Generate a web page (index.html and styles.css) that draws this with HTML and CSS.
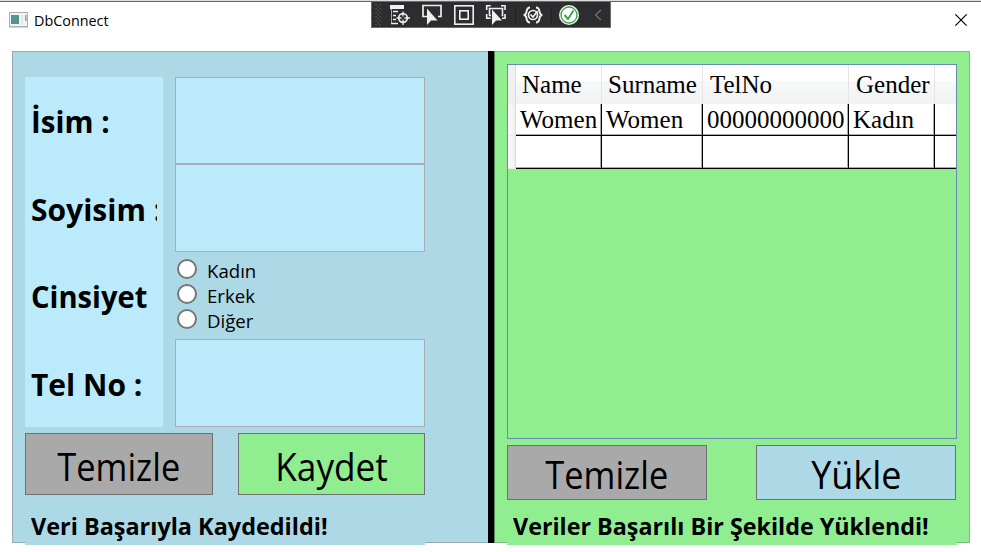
FILE: index.html
```html
<!DOCTYPE html>
<html lang="tr">
<head>
<meta charset="utf-8">
<title>DbConnect</title>
<link rel="stylesheet" href="styles.css">
</head>
<body>
<header class="titlebar">
  <svg class="app-icon" width="20" height="16" viewBox="0 0 20 16">
    <rect x=".5" y=".5" width="18" height="14" fill="#f1f3f5" stroke="#a9afb8"/>
    <path d="M0 15.5h19" stroke="#d4d4d4"/>
    <rect x="2" y="3" width="8" height="9" fill="#5b8fae"/>
    <path d="M2 12V8l8-4v8z" fill="#4c9b74" opacity=".8"/>
    <rect x="12" y="3" width="2" height="10" fill="#e2e6ea"/>
    <rect x="16" y="3" width="1.500" height="6" fill="#71b59b"/>
  </svg>
  <span class="caption">DbConnect</span>
  <svg class="close" width="12" height="12" viewBox="0 0 12 12"><path d="M.4.400l11.200 11.200M11.600.400L.4 11.600" stroke="#000" stroke-width="1.200"/></svg>
</header>
<div class="debugbar">
  <svg width="240" height="27" viewBox="371 1 240 27" fill="none">
    <rect x="371.500" y="1.500" width="239" height="26" fill="#2d2d30" stroke="#6b6b6e"/>
    <g stroke="#59595c" stroke-width="1.300" stroke-dasharray="1.300 2.700"><path d="M376 4v22M380 4v22"/><path d="M378 6v20"/></g>
    <g stroke="#f0f0f0" stroke-width="1.300">
      <path d="M390 7h14" stroke-width="4"/>
      <path d="M393 11.500h5M393 15.500h3M393 19.500h3M391 23.500h7" stroke-width="1.500"/>
      <path d="M391.500 9v14" stroke="#a8a8a8" stroke-width="1"/>
      <circle cx="403" cy="18" r="4.300" stroke-width="1.700"/><path d="M403 11.500v5M403 19.500v5.500M396.500 18h5M404.500 18h5.500"/>
      <path d="M427 16.500h-4v-11h18v11h-3" stroke-width="1.700"/>
      <path d="M427 8.500v16.500l4-4.500h6.500z" fill="#f0f0f0" stroke="none"/>
      <rect x="454.800" y="5.800" width="18.400" height="18.400" stroke-width="1.600"/>
      <rect x="459.800" y="10.800" width="8.400" height="8.400" stroke-width="1.600"/>
      <path d="M486.700 10V5.700h4M501 5.700h4V10M505 14v4.300h-3M486.700 14v4.300h4" stroke-width="1.600"/>
      <path d="M491 15.500h-1.500v-7h13v7h-1" stroke-width="1.600"/>
      <path d="M492 9.500v15.500l4-4.500h6z" fill="#f0f0f0" stroke="none"/>
      <path d="M530 7.500c-4 0-3 4-4 6l-1.500 1.500 1.500 1.500c1 2 0 6 4 6M536 7.500c4 0 3 4 4 6l1.500 1.500-1.500 1.500c-1 2 0 6-4 6" stroke-width="2"/>
      <circle cx="533" cy="15" r="4.500" stroke-width="1.700"/><path d="M530.500 14.500l2.500 2.500 4.500-6" stroke-width="1.700"/>
    </g>
    <path d="M515.500 6v18M551.500 6v18" stroke="#222225"/>
    <circle cx="569" cy="15" r="10" fill="#f4f4f4"/><circle cx="569" cy="15" r="8" fill="#fff" stroke="#36a345" stroke-width="1.300"/>
    <path d="M564.500 15l3.500 4 5.500-8.500" stroke="#36a345" stroke-width="1.900"/>
    <path d="M601 10l-5.500 5 5.500 5" stroke="#707073" stroke-width="1.300"/>
  </svg>
</div>
<main class="window">
  <section class="pane entry">
    <div class="form">
      <div class="labels">
        <div class="label"><span class="l1">İsim :</span></div>
        <div class="label"><span class="l2">Soyisim :</span></div>
        <div class="label"><span class="l3">Cinsiyet :</span></div>
        <div class="label"><span class="l4">Tel No :</span></div>
      </div>
      <div class="fields">
        <div class="box"></div>
        <div class="box"></div>
        <div class="radios">
          <div class="radio"><i></i><span>Kadın</span></div>
          <div class="radio"><i></i><span>Erkek</span></div>
          <div class="radio"><i></i><span>Diğer</span></div>
        </div>
        <div class="box"></div>
      </div>
    </div>
    <div class="buttons">
      <div class="button gray"><span class="b-clear">Temizle</span></div>
      <div class="button green"><span class="b-save">Kaydet</span></div>
    </div>
    <div class="status"><span class="s1">Veri Başarıyla Kaydedildi!</span></div>
  </section>
  <div class="divider"></div>
  <section class="pane list">
    <div class="datagrid">
      <div class="row head"><b></b><div>Name</div><div>Surname</div><div>TelNo</div><div>Gender</div><div></div></div>
      <div class="row first"><b></b><div>Women</div><div>Women</div><div>00000000000</div><div>Kadın</div><div></div></div>
      <div class="row"><b></b><div></div><div></div><div></div><div></div><div></div></div>
    </div>
    <div class="buttons">
      <div class="button gray"><span class="b-clear">Temizle</span></div>
      <div class="button blue"><span class="b-load">Yükle</span></div>
    </div>
    <div class="status"><span class="s2">Veriler Başarılı Bir Şekilde Yüklendi!</span></div>
  </section>
</main>
</body>
</html>
```
FILE: styles.css
```css
* { box-sizing: border-box; }
body { margin: 0; width: 981px; height: 552px; overflow: hidden; background: #fff; color: #000; font-family: "Open Sans", "Noto Sans", sans-serif; }
span { display: inline-block; white-space: nowrap; transform-origin: left center; }
.titlebar { height: 51px; border-top: 1px solid #dcdcdc; box-shadow: inset 0 1px #696969; display: flex; align-items: flex-start; padding: 11px 14px 0 9px; }
.caption { font-size: 14.500px; line-height: 18px; margin-left: 5px; transform: scaleX(.99); }
.close { margin: 2px 0 0 auto; }
.debugbar { position: absolute; left: 371px; top: 1px; height: 27px; }
.debugbar svg { display: block; }
.window { display: flex; margin-left: 12px; width: 958px; height: 492px; }
.pane { height: 492px; border: 1px solid #9aabb2; padding: 25px 0 0 12px; }
.entry { width: 476px; background: #add8e6; border-right: 0; }
.divider { width: 6px; background: #000; }
.list { width: 476px; background: #90ee90; padding-top: 12px; border-color: #83b783; border-left-color: #518751; }
.form { display: flex; gap: 12px; height: 350px; }
.labels { width: 138px; background: #bbebfb; padding: 0 6px; }
.label { height: 87.500px; display: flex; align-items: center; overflow: hidden; font-size: 30px; font-weight: 700; padding-top: 3px; }
.l1 { transform: translateY(-1px) scaleX(.985); }
.l3 { transform: translateY(-1px) scaleX(.97); word-spacing: 2px; }
.fields { width: 250px; display: grid; grid-template-rows: 87px 88px 87px 88px; }
.box { background: #bbebfb; border: 1px solid #abadb3; }
.radios { padding: 7px 0 0 2px; }
.radio { height: 25px; display: flex; }
.radio i { width: 20px; height: 20px; border: 2px solid #777; border-radius: 50%; background: #fff; flex: none; }
.radio span { font-size: 19px; line-height: 25px; margin: 0 0 0 10px; transform: scaleX(.98); }
.buttons { display: flex; justify-content: space-between; margin-top: 6px; width: 400px; height: 62px; }
.button { border: 1px solid #707070; width: 188px; display: flex; justify-content: center; align-items: center; font-size: 38.500px; line-height: 50px; padding-top: 4px; }
.button span { transform-origin: center; }
.b-clear { transform: scaleX(.893); }
.b-save { transform: scaleX(.915); }
.b-load { transform: scaleX(.935); }
.button.green { width: 187px; }
.gray { background: #a9a9a9; }
.green { background: #90ee90; }
.blue { background: #add8e6; }
.status { position: relative; width: 400px; height: 50px; padding: 14px 6px 0; background: #add8e6; font-size: 24px; font-weight: 700; line-height: 34px; }
.s1 { transform: scaleX(.976); }
.s2 { transform: scaleX(.971); }
.list .status { background: #90ee90; width: 450px; height: 45px; padding-top: 9px; }
.list .buttons { width: 449px; height: 55px; }
.list .button { width: 200px; padding-top: 2px; }
.datagrid { width: 450px; height: 375px; border: 1px solid #688caf; font-family: "Liberation Serif", serif; font-size: 25px; }
.row { display: grid; grid-template-columns: 8px 86px 101px 146px 86px 21px; height: 33px; }
.row > b { background: linear-gradient(90deg, #fff, #eee); border-right: 1px solid #ddd; border-bottom: 1px solid #eee; }
.row > div { background: #fff; border-right: 1px solid #000; border-bottom: 1px solid #000; box-shadow: inset -1px -1px #aaa; line-height: 31px; padding-left: 4px; white-space: nowrap; }
.row > div:last-child { border-right: 0; box-shadow: inset 0 -1px #aaa; }
.first { height: 32px; }
.head { height: 39px; }
.head > b { background: #f0f0f0; }
.row.head > div { background: linear-gradient(#fff 0 40%, #f7f8fa 41%, #f0f1f3); border-right-color: #e3e5e7; border-bottom-color: #d2d4d6; box-shadow: none; line-height: 40px; padding-left: 6px; }
.row.head > div:nth-child(n+4) { padding-left: 7px; }
```
